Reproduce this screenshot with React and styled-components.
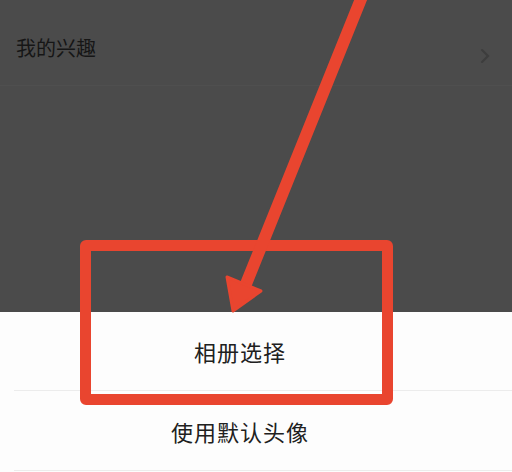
import React from "react";
import styled, { createGlobalStyle } from "styled-components";

const Global = createGlobalStyle`
  html, body {
    margin: 0;
    padding: 0;
    background: #fdfdfd;
    overflow: hidden;
  }
  body {
    font-family: "Noto Sans CJK SC", "Noto Sans", sans-serif;
  }
`;

const Screen = styled.div`
  position: relative;
  width: 512px;
  height: 472px;
  display: flex;
  flex-direction: column;
  overflow: hidden;
`;

// dimmed settings page behind the bottom sheet
const Backdrop = styled.div`
  height: 312px;
  background: #4b4b4b;
  display: flex;
  flex-direction: column;
`;

const SettingRow = styled.div`
  height: 75px;
  padding: 10px 22px 0 16px;
  display: flex;
  align-items: center;
  justify-content: space-between;
  border-bottom: 1px solid #4f4f4f;
`;

const SettingLabel = styled.span`
  font-size: 20px;
  color: #161616;
`;

const ChevronBox = styled.span`
  display: flex;
  margin-top: 16px;
  opacity: 0.8;
`;

const Sheet = styled.div`
  flex: 1;
  background: #fdfdfd;
  display: flex;
  flex-direction: column;
`;

const SheetItem = styled.div`
  height: ${(p) => p.h}px;
  display: flex;
  align-items: center;
  justify-content: center;
  font-size: 22px;
  color: #202020;
  letter-spacing: 1px;
  border-bottom: 1px solid #ececec;
  margin-left: 14px;
  padding-right: 46px;
`;

const Highlight = styled.div`
  position: absolute;
  left: 80px;
  top: 240px;
  width: 313px;
  height: 165px;
  box-sizing: border-box;
  border: 11px solid #e9452f;
  border-radius: 6px;
`;

const ArrowLayer = styled.svg`
  position: absolute;
  left: 0;
  top: 0;
  pointer-events: none;
`;

const Chevron = () => (
  <svg width="10" height="16" viewBox="0 0 10 16">
    <path d="M2 2 L8 8 L2 14" fill="none" stroke="#3a3a3a" strokeWidth="2" strokeLinecap="round" />
  </svg>
);

export default function App() {
  return (
    <>
      <Global />
      <Screen>
        <Backdrop>
          <SettingRow>
            <SettingLabel>我的兴趣</SettingLabel>
            <ChevronBox>
              <Chevron />
            </ChevronBox>
          </SettingRow>
        </Backdrop>
        <Sheet>
          <SheetItem h={78}>相册选择</SheetItem>
          <SheetItem h={79}>使用默认头像</SheetItem>
        </Sheet>
        <Highlight />
        <ArrowLayer width="512" height="472" viewBox="0 0 512 472">
          <path
            d="M363 -6 Q 300 150 246 284"
            stroke="#e9452f"
            strokeWidth="12"
            strokeLinecap="round"
            fill="none"
          />
          <path d="M227 277 L233 311 L261 291 Z" fill="#e9452f" stroke="#e9452f" strokeWidth="3" strokeLinejoin="round" />
        </ArrowLayer>
      </Screen>
    </>
  );
}
